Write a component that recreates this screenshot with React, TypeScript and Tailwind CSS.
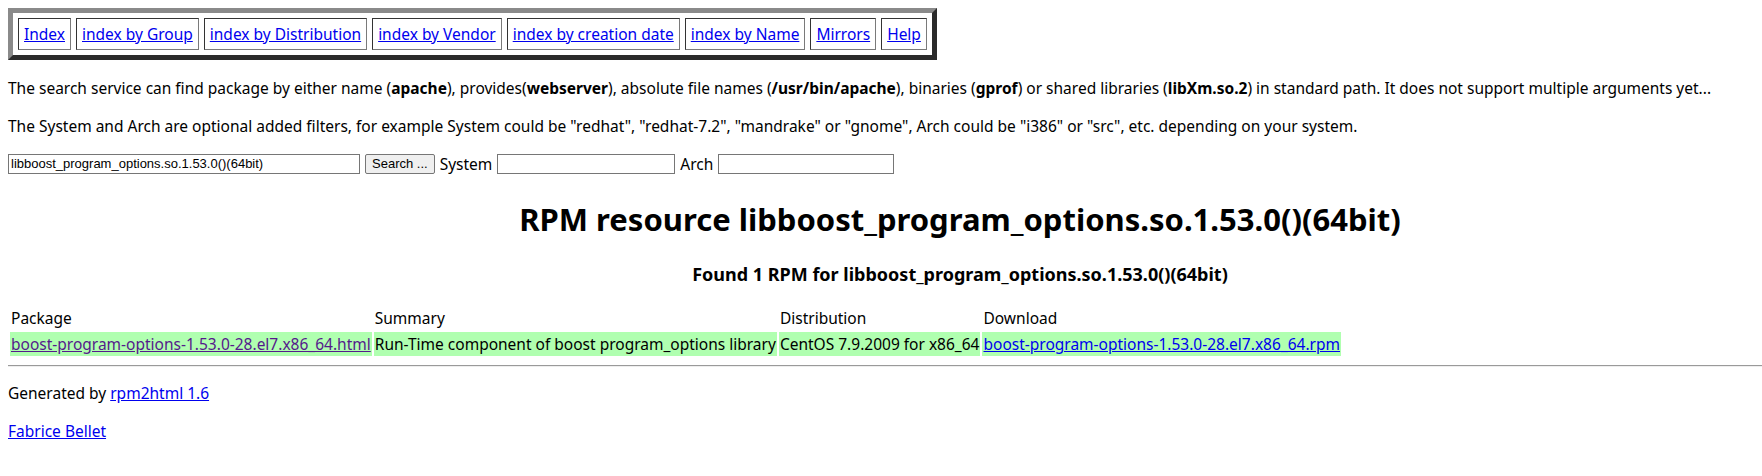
import React from 'react';

const navLinks = [
  'Index',
  'index by Group',
  'index by Distribution',
  'index by Vendor',
  'index by creation date',
  'index by Name',
  'Mirrors',
  'Help',
];

const resource = 'libboost_program_options.so.1.53.0()(64bit)';

const App: React.FC = () => {
  return (
    <div className="w-full overflow-hidden bg-white text-black font-['Noto_Sans',sans-serif] text-[15.5px] leading-[22px]">
      <div className="w-[1920px] p-2">
        {/* Navigation */}
        <table className="border-separate border-spacing-[5px] border-[5px] border-solid border-t-[#8a8a8a] border-l-[#8a8a8a] border-r-[#2b2b2b] border-b-[#2b2b2b]">
          <tbody>
            <tr>
              {navLinks.map(label => (
                <td
                  key={label}
                  className="border border-solid border-t-[#333] border-l-[#333] border-r-[#7a7a7a] border-b-[#7a7a7a] px-[5px] py-[4px]"
                >
                  <a href="#" className="underline text-[#0000ee]">
                    {label}
                  </a>
                </td>
              ))}
            </tr>
          </tbody>
        </table>

        <p className="mt-[17px] mb-4">
          The search service can find package by either name (<b>apache</b>), provides(<b>webserver</b>), absolute file names (<b>/usr/bin/apache</b>), binaries (<b>gprof</b>) or shared libraries (<b>libXm.so.2</b>) in standard path. It does not support multiple arguments yet...
        </p>
        <p className="my-4">
          The System and Arch are optional added filters, for example System could be "redhat", "redhat-7.2", "mandrake" or "gnome", Arch could be "i386" or "src", etc. depending on your system.
        </p>

        <form className="flex items-center mb-4" onSubmit={e => e.preventDefault()}>
          <input
            type="text"
            defaultValue={resource}
            className="w-[352px] h-[20px] px-[2px] border border-[#767676] text-[13px] font-['Liberation_Sans',Arial,sans-serif] outline-none"
          />
          <button
            type="submit"
            className="ml-[5px] h-[20px] px-[6px] bg-[#efefef] border border-[#767676] rounded-[2px] text-[13px] leading-[18px] font-['Liberation_Sans',Arial,sans-serif]"
          >
            Search ...
          </button>
          <span className="ml-[5px]">System</span>
          <input
            type="text"
            className="ml-[5px] w-[178px] h-[20px] border border-[#767676] outline-none"
          />
          <span className="ml-[5px]">Arch</span>
          <input
            type="text"
            className="ml-[5px] w-[176px] h-[20px] border border-[#767676] outline-none"
          />
        </form>

        <h1 className="text-center text-[31px] leading-[43px] font-bold mt-[23px] mb-[21px]">
          RPM resource {resource}
        </h1>

        <h3 className="text-center text-[18px] leading-[25px] font-bold mt-[21px] mb-[19px]">
          Found 1 RPM for {resource}
        </h3>

        <table className="border-separate border-spacing-x-[2px] border-spacing-y-0">
          <tbody>
            <tr>
              <td className="px-[1px] pt-[1px] pb-[3px]">Package</td>
              <td className="px-[1px] pt-[1px] pb-[3px]">Summary</td>
              <td className="px-[1px] pt-[1px] pb-[3px]">Distribution</td>
              <td className="px-[1px] pt-[1px] pb-[3px]">Download</td>
            </tr>
            <tr className="bg-[#b0ffb0]">
              <td className="p-[1px]">
                <a href="#" className="underline text-[#551a8b]">boost-program-options-1.53.0-28.el7.x86_64.html</a>
              </td>
              <td className="p-[1px]">Run-Time component of boost program_options library</td>
              <td className="p-[1px]">CentOS 7.9.2009 for x86_64</td>
              <td className="p-[1px]">
                <a href="#" className="underline text-[#0000ee]">boost-program-options-1.53.0-28.el7.x86_64.rpm</a>
              </td>
            </tr>
          </tbody>
        </table>

        <hr className="mt-[9px] mb-2 border-t border-b border-t-[#9a9a9a] border-b-[#eeeeee]" />

        <p className="mt-[15px] mb-4">
          Generated by <a href="#" className="underline text-[#0000ee]">rpm2html 1.6</a>
        </p>
        <p className="my-4">
          <a href="#" className="underline text-[#0000ee]">Fabrice Bellet</a>
        </p>
      </div>
    </div>
  );
};

export default App;
